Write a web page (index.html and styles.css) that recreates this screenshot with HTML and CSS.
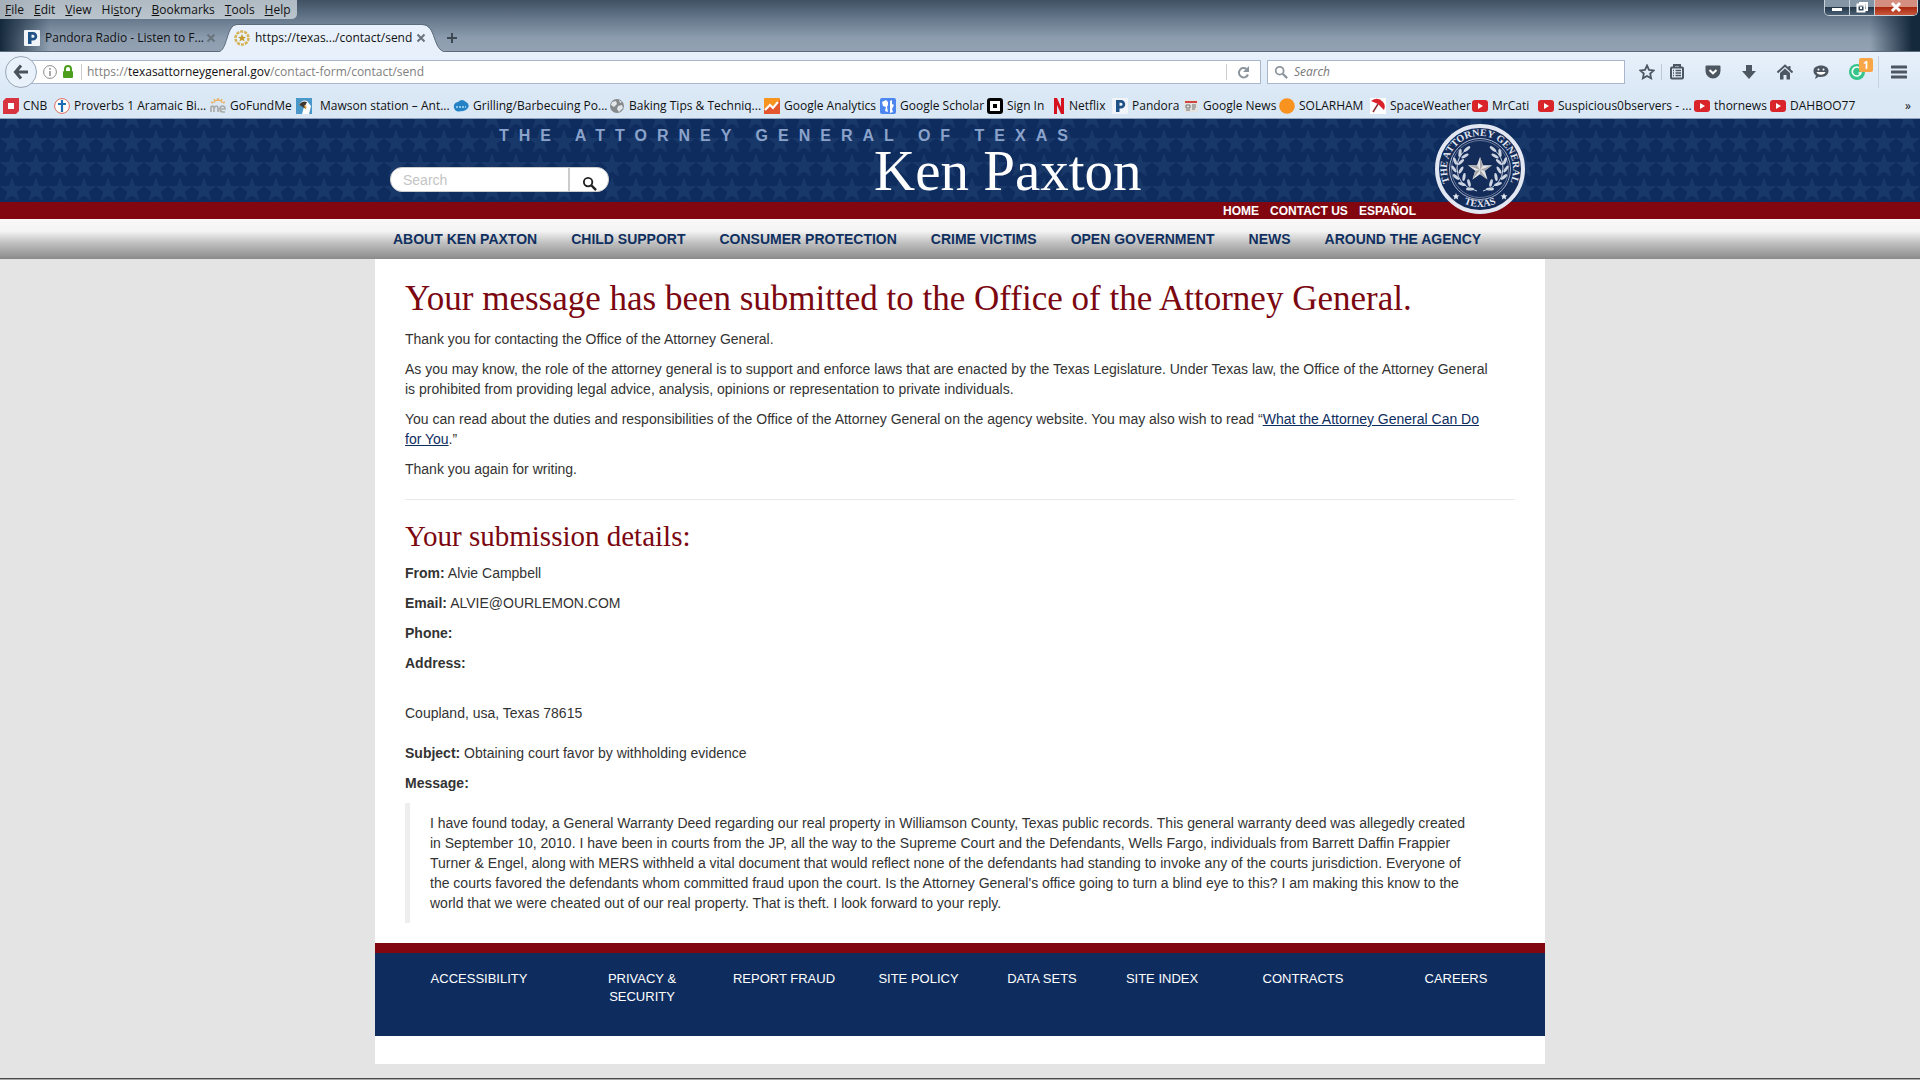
FILE: index.html
```html
<!DOCTYPE html>
<html lang="en">
<head>
<meta charset="utf-8">
<title>https://texas.../contact/send</title>
<link rel="stylesheet" href="styles.css">
</head>
<body>
<svg class="defs" aria-hidden="true">
  <symbol id="youtube" viewBox="0 0 16 16"><rect y="2" width="16" height="12" rx="3" fill="#d9252a"/><path d="M6 5v6l5-3z" fill="#fff"/></symbol>
  <symbol id="pandora" viewBox="0 0 16 16"><rect width="16" height="16" rx="1" fill="#f1f5f9"/><path d="M4 2h5a4 4 0 0 1 0 8.500H7.500V14H4z M7.500 4.800v3H9a1.500 1.500 0 0 0 0-3z" fill="#1f5286" fill-rule="evenodd"/></symbol>
  <symbol id="glass" viewBox="0 0 16 16"><circle cx="6.500" cy="6.500" r="4.500" fill="none" stroke="currentColor" stroke-width="2"/><path d="M10 10l5 5" stroke="currentColor" stroke-width="2.500"/></symbol>
  <symbol id="cross" viewBox="0 0 10 10"><path d="M1.500 1.500l7 7m0-7l-7 7" stroke="currentColor" stroke-width="2"/></symbol>
</svg>

<div class="browser">
  <div class="frame">
    <div class="title-row">
      <div class="menus">
        <button><u>F</u>ile</button><button><u>E</u>dit</button><button><u>V</u>iew</button><button>Hi<u>s</u>tory</button><button><u>B</u>ookmarks</button><button><u>T</u>ools</button><button><u>H</u>elp</button>
      </div>
      <div class="window-buttons">
        <button class="win" aria-label="Minimize"><svg width="24" height="16"><rect x="7" y="8" width="10" height="3" fill="#fff"/></svg></button>
        <button class="win" aria-label="Restore"><svg width="24" height="16" fill="none" stroke="#fff" stroke-width="2"><path d="M10 5V3h7v7h-2"/><rect x="7.500" y="4.500" width="7" height="7"/><path d="M10 8h2"/></svg></button>
        <button class="win win-close" aria-label="Close"><svg width="42" height="16"><path d="M17 3l8 8m0-8l-8 8" stroke="#fff" stroke-width="3"/></svg></button>
      </div>
    </div>
    <div class="tabs">
      <div class="tab">
        <svg width="16" height="16"><use href="#pandora"/></svg>
        <span class="tab-title">Pandora Radio - Listen to F...</span>
        <button class="tab-close" aria-label="Close tab"><svg width="10" height="10"><use href="#cross"/></svg></button>
      </div>
      <div class="tab tab-active">
        <svg class="tab-shape" width="228" height="28" viewBox="0 0 228 28"><path d="M0 28C10 27 8 1 19 1H204C219 1 214 27 228 28z" fill="#e8f1fb"/><path d="M0 28C10 27 8 .5 19 .5H204C219 .5 214 27 228 28" fill="none" stroke="#5c6b7a"/></svg>
        <svg width="16" height="16" viewBox="0 0 16 16"><circle cx="8" cy="8" r="6.500" fill="none" stroke="#d5b254" stroke-width="2.500" stroke-dasharray="3 1"/><path d="M8 4l1.200 2.700 2.800.2-2.200 1.800.8 2.800L8 10l-2.600 1.500.8-2.800L4 6.900l2.800-.2z" fill="#c59b2d"/></svg>
        <span class="tab-title">https://texas.../contact/send</span>
        <button class="tab-close" aria-label="Close tab"><svg width="10" height="10"><use href="#cross"/></svg></button>
      </div>
      <button class="new-tab" aria-label="New tab"><svg width="12" height="12"><path d="M6 1v10M1 6h10" stroke="#3d4853" stroke-width="2"/></svg></button>
    </div>
  </div>

  <div class="toolbar">
    <button class="back" aria-label="Back"><svg width="16" height="16" viewBox="0 0 16 16" fill="none" stroke="#4a525b" stroke-width="3"><path d="M8 1.500L2.500 8 8 14.500M3 8h12"/></svg></button>
    <div class="address-bar">
      <svg width="14" height="14" viewBox="0 0 14 14"><circle cx="7" cy="7" r="6.400" fill="none" stroke="#8c8c8c"/><path d="M7 6v5M7 3v1.800" stroke="#8c8c8c" stroke-width="1.500"/></svg>
      <svg width="12" height="14" viewBox="0 0 12 14"><path d="M3 7V4a3 3 0 0 1 6 0v3" fill="none" stroke="#4d9e1d" stroke-width="2"/><rect x="1" y="6" width="10" height="7" rx="1" fill="#4d9e1d"/></svg>
      <span class="url">https://<b>texasattorneygeneral.gov</b>/contact-form/contact/send</span>
      <button class="reload" aria-label="Reload"><svg width="13" height="13" viewBox="0 0 13 13"><path d="M11 8.500A4.700 4.700 0 1 1 9.500 3" fill="none" stroke="#8d959c" stroke-width="2"/><path d="M12 0v6H6z" fill="#8d959c"/></svg></button>
    </div>
    <label class="web-search"><svg width="14" height="14"><use href="#glass"/></svg><input type="search" placeholder="Search" aria-label="Search the web"></label>
    <div class="bookmark-tools">
      <button class="tool tool-star" aria-label="Bookmark this page"><svg width="16" height="16" viewBox="0 0 16 16"><path d="M8 1.500l2 4.300 4.700.6-3.500 3.200.9 4.700L8 12l-4.100 2.300.9-4.700L1.300 6.400 6 5.800z" fill="none" stroke="#4d5761" stroke-width="1.800"/></svg></button>
      <button class="tool" aria-label="Bookmarks list"><svg width="16" height="16" viewBox="0 0 16 16"><path d="M5 3V1h6v2" fill="none" stroke="#4d5761" stroke-width="2"/><rect x="2" y="3.500" width="12" height="11" rx="1" fill="none" stroke="#4d5761" stroke-width="2"/><path d="M4 6.500h1m1.500 0H12M4 9h1m1.500 0H12M4 11.500h1m1.500 0H12" stroke="#4d5761" stroke-width="1.500"/></svg></button>
    </div>
    <button class="tool" aria-label="Pocket"><svg width="16" height="16" viewBox="0 0 16 16"><path d="M1.500 1.500h13a1 1 0 0 1 1 1V7a7.500 7.500 0 0 1-15 0V2.500a1 1 0 0 1 1-1z" fill="#4d5761"/><path d="M4.500 6L8 9.300 11.500 6" fill="none" stroke="#fff" stroke-width="2"/></svg></button>
    <button class="tool" aria-label="Downloads"><svg width="16" height="16" viewBox="0 0 16 16"><path d="M5 1h6v6h4l-7 8-7-8h4z" fill="#4d5761"/></svg></button>
    <button class="tool" aria-label="Home"><svg width="16" height="16" viewBox="0 0 16 16"><path d="M.5 8.500L8 1.500l7.500 7M12.500 5V2" fill="none" stroke="#4d5761" stroke-width="2"/><path d="M3 9l5-4.500L13 9v6.500H9.500V11h-3v4.500H3z" fill="#4d5761"/></svg></button>
    <button class="tool" aria-label="Hello"><svg width="16" height="16" viewBox="0 0 16 16"><path d="M8 1.500c4.500 0 7.500 2.300 7.500 5.500S12.500 13 8 13c-1 0-1.500 0-2.300-.3L2 15l1-3.500C1.300 10.400.5 9 .5 7 .5 3.800 3.500 1.500 8 1.500z" fill="#4d5761"/><circle cx="5.500" cy="5.500" r="1" fill="#fff"/><circle cx="10.500" cy="5.500" r="1" fill="#fff"/><path d="M3.500 8h9c-1 3.500-8 3.500-9 0z" fill="#fff"/></svg></button>
    <button class="tool tool-badged" aria-label="Grammar check"><svg width="16" height="16" viewBox="0 0 16 16"><circle cx="8" cy="8" r="8" fill="#36c48a"/><path d="M11.500 5A4.500 4.500 0 1 0 12 9H9.500" fill="none" stroke="#fff" stroke-width="1.600"/></svg><span class="badge">1</span></button>
    <button class="tool tool-menu" aria-label="Open menu"><svg width="16" height="14"><path d="M1 2h14M1 7h14M1 12h14" stroke="#4d5761" stroke-width="3" stroke-linecap="round"/></svg></button>
  </div>

  <nav class="bookmarks" aria-label="Bookmarks">
    <a href="#"><svg width="16" height="16"><path d="M3 0h13v13l-3 3H0V3z" fill="#d8343f"/><rect x="5" y="5" width="6" height="6" fill="#fff"/></svg>CNB</a>
    <a href="#"><svg width="16" height="16"><circle cx="8" cy="8" r="7.400" fill="#fff" stroke="#dc6a5a"/><path d="M8 2v12M4 6h8" stroke="#1c6fb5" stroke-width="2.200"/></svg>Proverbs 1 Aramaic Bi...</a>
    <a href="#"><svg width="16" height="16" fill="none"><path d="M3 5L1 4m4-1L4 1m4 2V0m3 3l1-2m1 4l2-1M4 5a4 3 0 0 1 8 0" stroke="#e9b36a" stroke-width="1.500"/><path d="M1 14V9q3-2 3 1v4-4q3-4 4 0v4m2-3h5q0-3-2.500-3T10 11q0 3 3 3h2" stroke="#a9aaa6" stroke-width="1.700"/></svg>GoFundMe</a>
    <a href="#" class="spaced"><svg width="16" height="16"><rect width="16" height="16" fill="#4a98c9"/><path d="M3 7q3-6 8-4l4 5-2 8H6l2-7z" fill="#fff"/><path d="M3 7q3-5 8-3l-2 4 1 3-5-3z" fill="#3e3730"/><path d="M8 7l3 2-2 2z" fill="#e7a23b"/></svg>Mawson station – Ant...</a>
    <a href="#"><svg width="16" height="16"><path d="M1 10Q0 5 5 4q4-4 8 0 4 2 2 6-3 4-7 3-5 2-7-3z" fill="#2582c4"/><path d="M3 9h10" stroke="#8cc8ec" stroke-width="2" stroke-dasharray="2 1"/></svg>Grilling/Barbecuing Po...</a>
    <a href="#"><svg width="16" height="16"><circle cx="8" cy="8" r="7" fill="#85898c"/><path d="M3 4l4-1 1 3-3 3-3-2zM9 8l4-1 1 3-4 4-2-3zM10 2l3 2-2 1z" fill="#e3e6e8"/></svg>Baking Tips &amp; Techniq...</a>
    <a href="#"><svg width="16" height="16"><rect width="16" height="16" rx="1" fill="#f79420"/><path d="M0 12l5-5 4 3 7-8v14H0z" fill="#e4572e"/><path d="M1 12l5-5 3 3 5-6" fill="none" stroke="#fff" stroke-width="2"/></svg>Google Analytics</a>
    <a href="#"><svg width="16" height="16"><rect width="16" height="16" rx="2" fill="#4c86ee"/><path d="M2 4l4-2 2 2v3l-1 2 1 5-3-1 1-4-3-1zM10 3l2-1v4l2 1-2 4 1 3-3 1z" fill="#fff"/></svg>Google Scholar</a>
    <a href="#"><svg width="16" height="16"><rect x="1.500" y="1.500" width="13" height="13" rx="1.500" fill="#fff" stroke="#000" stroke-width="3"/><rect x="6" y="6" width="4" height="4"/></svg>Sign In</a>
    <a href="#"><svg width="12" height="16"><path d="M1 0h3l4 9V0h3v16H8L4 7v9H1z" fill="#d5121e"/></svg>Netflix</a>
    <a href="#"><svg width="16" height="16"><use href="#pandora"/></svg>Pandora</a>
    <a href="#"><svg width="16" height="16"><rect x="1" y="2" width="14" height="12" fill="#e3e3e1"/><path d="M2 4h12" stroke="#cf4740" stroke-width="2"/><path d="M3 7h4v3H3zM9 7h4M9 9h4M9 11h3M3 12h4" fill="none" stroke="#77736f"/></svg>Google News</a>
    <a href="#"><svg width="16" height="16"><circle cx="8" cy="8" r="7.800" fill="#f7931e"/></svg>SOLARHAM</a>
    <a href="#"><svg width="16" height="16"><rect width="16" height="16" fill="#fff"/><path d="M1 3q7-5 12 1 3 3 1 8L8 6z" fill="#d9222a"/><path d="M8 6l-5 8" stroke="#8d2a2a" stroke-width="1.500"/></svg>SpaceWeather</a>
    <a href="#"><svg width="16" height="16"><use href="#youtube"/></svg>MrCati</a>
    <a href="#"><svg width="16" height="16"><use href="#youtube"/></svg>Suspicious0bservers - ...</a>
    <a href="#"><svg width="16" height="16"><use href="#youtube"/></svg>thornews</a>
    <a href="#"><svg width="16" height="16"><use href="#youtube"/></svg>DAHBOO77</a>
    <button class="more" aria-label="More bookmarks">»</button>
  </nav>
</div>

<header class="site-header">
  <svg class="stars" aria-hidden="true">
    <defs><pattern id="star-tile" y="10" width="24" height="24" patternUnits="userSpaceOnUse"><path d="M12 0l3 9h9l-7.200 5.600L19.600 24 12 18.500 4.400 24l2.800-9.400L0 9h9z" fill="#18386a"/></pattern></defs>
    <rect width="100%" height="100%" fill="url(#star-tile)"/>
  </svg>
  <div class="container masthead">
    <p class="tagline">THE ATTORNEY GENERAL OF TEXAS</p>
    <div class="masthead-row">
      <form class="site-search">
        <input type="text" placeholder="Search" aria-label="Search this site">
        <button type="button" aria-label="Search"><svg width="15" height="15"><use href="#glass"/></svg></button>
      </form>
      <p class="name">Ken Paxton</p>
    </div>
    <svg class="seal" width="90" height="90" viewBox="0 0 90 90" role="img" aria-label="Seal of the Attorney General of Texas">
      <defs>
        <path id="arc-top" d="M21.700 68.300A33 33 0 1 1 68.300 68.300"/>
        <path id="arc-bottom" d="M11 63A39 39 0 0 0 79 63"/>
        <g id="branch" fill="#cdd4e2"><path d="M42 67Q22 62 22 44 22 32 32 25" fill="none" stroke="#cdd4e2"/><ellipse cx="32" cy="25" rx="4" ry="1.500" transform="rotate(-40 32 25)"/><ellipse cx="25" cy="29" rx="4" ry="1.500" transform="rotate(-80 25 29)"/><ellipse cx="30" cy="32" rx="4" ry="1.500" transform="rotate(-30 30 32)"/><ellipse cx="20" cy="37" rx="4" ry="1.500" transform="rotate(70 20 37)"/><ellipse cx="26" cy="38" rx="4" ry="1.500" transform="rotate(-45 26 38)"/><ellipse cx="19" cy="45" rx="4" ry="1.500" transform="rotate(55 19 45)"/><ellipse cx="26" cy="46" rx="4" ry="1.500" transform="rotate(-60 26 46)"/><ellipse cx="21" cy="53" rx="4" ry="1.500" transform="rotate(40 21 53)"/><ellipse cx="29" cy="53" rx="4" ry="1.500" transform="rotate(-80 29 53)"/><ellipse cx="27" cy="60" rx="4" ry="1.500" transform="rotate(20 27 60)"/><ellipse cx="34" cy="59" rx="4" ry="1.500" transform="rotate(75 34 59)"/><ellipse cx="35" cy="65" rx="4" ry="1.500"/></g>
      </defs>
      <circle cx="45" cy="45" r="43" fill="#132c5a" stroke="#e3e7f2" stroke-width="4"/>
      <circle cx="45" cy="45" r="30.500" fill="none" stroke="#aab5cc"/>
      <circle cx="45" cy="45" r="28.500" fill="none" stroke="#8794b3" stroke-width=".7"/>
      <use href="#branch"/><use href="#branch" transform="matrix(-1 0 0 1 90 0)"/>
      <path d="M45 33l3 8.300h9l-7.200 5.400 2.700 8.800-7.500-5.200-7.500 5.200 2.700-8.800L33 41.300h9z" fill="#e4e4e6"/>
      <path d="M45 33v13l3-4.700zM57 41.300L45 46l4.800.7zM52.500 55.500L45 46v4.300zM37.500 55.500L45 46l-4.800.7zM33 41.300L45 46l-3-4.700z" fill="#a6a6aa"/>
      <path d="M21 69l1 2.200 2.400.2-1.800 1.600.5 2.400-2.100-1.200-2.100 1.200.5-2.400-1.800-1.600 2.400-.2zM69 69l1 2.200 2.400.2-1.800 1.600.5 2.400-2.100-1.200-2.100 1.200.5-2.400-1.800-1.600 2.400-.2z" fill="#e3e7f2"/>
      <text class="seal-text"><textPath href="#arc-top" startOffset="50%" text-anchor="middle">THE ATTORNEY GENERAL</textPath></text>
      <text class="seal-text"><textPath href="#arc-bottom" startOffset="50%" text-anchor="middle">TEXAS</textPath></text>
    </svg>
  </div>
  <div class="utility">
    <nav class="container utility-links" aria-label="Utility">
      <a href="#">HOME</a><a href="#">CONTACT US</a><a href="#">ESPAÑOL</a>
    </nav>
  </div>
</header>
<div class="main-nav">
  <nav class="container main-links" aria-label="Main">
    <a href="#">ABOUT KEN PAXTON</a><a href="#">CHILD SUPPORT</a><a href="#">CONSUMER PROTECTION</a><a href="#">CRIME VICTIMS</a><a href="#">OPEN GOVERNMENT</a><a href="#">NEWS</a><a href="#">AROUND THE AGENCY</a>
  </nav>
</div>

<div class="container page">
  <main class="content">
    <h1>Your message has been submitted to the Office of the Attorney General.</h1>
    <p>Thank you for contacting the Office of the Attorney General.</p>
    <p>As you may know, the role of the attorney general is to support and enforce laws that are enacted by the Texas Legislature. Under Texas law, the Office of the Attorney General<br> is prohibited from providing legal advice, analysis, opinions or representation to private individuals.</p>
    <p>You can read about the duties and responsibilities of the Office of the Attorney General on the agency website. You may also wish to read “<a href="#">What the Attorney General Can Do<br> for You</a>.”</p>
    <p>Thank you again for writing.</p>
    <hr>
    <h2>Your submission details:</h2>
    <p><strong>From:</strong> Alvie Campbell</p>
    <p><strong>Email:</strong> ALVIE@OURLEMON.COM</p>
    <p><strong>Phone:</strong></p>
    <p><strong>Address:</strong></p>
    <address>Coupland, usa, Texas 78615</address>
    <p><strong>Subject:</strong> Obtaining court favor by withholding evidence</p>
    <p><strong>Message:</strong></p>
    <blockquote>I have found today, a General Warranty Deed regarding our real property in Williamson County, Texas public records. This general warranty deed was allegedly created<br> in September 10, 2010. I have been in courts from the JP, all the way to the Supreme Court and the Defendants, Wells Fargo, individuals from Barrett Daffin Frappier<br> Turner &amp; Engel, along with MERS withheld a vital document that would reflect none of the defendants had standing to invoke any of the courts jurisdiction. Everyone of<br> the courts favored the defendants whom committed fraud upon the court. Is the Attorney General's office going to turn a blind eye to this? I am making this know to the<br> world that we were cheated out of our real property. That is theft. I look forward to your reply.</blockquote>
  </main>
  <footer class="site-footer">
    <a href="#">ACCESSIBILITY</a><a href="#">PRIVACY &amp;<br> SECURITY</a><a href="#">REPORT FRAUD</a><a href="#">SITE POLICY</a><a href="#">DATA SETS</a><a href="#">SITE INDEX</a><a href="#">CONTRACTS</a><a href="#">CAREERS</a>
  </footer>
</div>
<div class="taskbar-edge"></div>
</body>
</html>
```
FILE: styles.css
```css
* { box-sizing: border-box; }

body {
  margin: 0;
  min-height: 100vh;
  display: flex;
  flex-direction: column;
  background: #e4e4e4;
  color: #333;
  font: 14px/20px "Liberation Sans", Arial, sans-serif;
}

button {
  border: 0;
  padding: 0;
  background: none;
  color: inherit;
  font: inherit;
}

input { font: inherit; min-width: 0; border: 0; outline: 0; background: none; }
svg { display: block; flex: none; }
.defs { position: absolute; width: 0; height: 0; }

/* Browser window */
.browser {
  color: #111;
  font: 12px/16px "Open Sans", "Noto Sans", sans-serif;
}

.frame {
  height: 52px;
  border-bottom: 1px solid #5c6b7a;
  background:
    linear-gradient(90deg, #15293c 0, rgba(21, 41, 60, 0) 50px, rgba(21, 41, 60, 0) calc(100% - 50px), #15293c calc(100% - 8px)),
    linear-gradient(#3f5162, #64768a 35%, #8d9daf 75%, #92a2b3);
}

.title-row { display: flex; justify-content: space-between; height: 24px; }

.menus {
  display: flex;
  gap: 10px;
  height: 19px;
  padding: 0 6px 0 5px;
  border-radius: 0 0 5px 0;
  background: rgba(213, 221, 227, .75);
}

.window-buttons {
  display: flex;
  height: 16px;
  margin-right: 2px;
  border: 1px solid #c6ced6;
  border-top: 0;
  border-radius: 0 0 5px 5px;
  overflow: hidden;
}

.win { border-right: 1px solid #c6ced6; background: linear-gradient(#8495a5 45%, #24384b 50%, #4b6074); }
.win-close { border-right: 0; background: linear-gradient(#d58f80 45%, #a9280e 50%, #c9583d); }

.tabs { display: flex; height: 28px; }
.tab { position: relative; display: flex; align-items: center; width: 218px; padding: 0 2px 0 24px; height: 28px; }
.tab-active { width: 228px; padding: 0 20px 0 16px; }
.tab > svg { position: relative; }
.tab > .tab-shape { position: absolute; left: 0; top: 0; }
.tab-title { position: relative; flex: 1; margin-left: 5px; white-space: nowrap; }
.tab-close { position: relative; color: #69737d; }
.new-tab { width: 14px; }

.toolbar {
  display: flex;
  align-items: center;
  gap: 6px;
  height: 40px;
  padding: 0 6px 0 5px;
  background: linear-gradient(#e8f1fb, #dbe8f6);
}

.back {
  position: relative;
  display: grid;
  place-items: center;
  width: 32px;
  height: 32px;
  margin-right: -12px;
  border: 1px solid #98a6b5;
  border-radius: 50%;
  background: #e9f1fa;
}

.address-bar, .web-search {
  display: flex;
  align-items: center;
  height: 24px;
  border: 1px solid #a9b6cb;
  background: #fff;
}

.address-bar { flex: 1; gap: 5px; padding-left: 11px; }
.url { flex: 1; margin-left: 2px; padding-left: 5px; border-left: 1px solid #ccc; color: #808080; }
.url b { color: #111; font-weight: 400; }
.reload { width: 34px; height: 16px; padding-left: 10px; border-left: 1px solid #ccc; }
.web-search { width: 358px; gap: 4px; padding-left: 6px; color: #8d959c; }
.web-search input { flex: 1; font-style: italic; }
.web-search input::placeholder { color: #777; }

.bookmark-tools { display: flex; }
.tool { position: relative; display: grid; place-items: center; width: 30px; height: 24px; }
.tool-star { width: 31px; }
.tool-star::after { content: ""; position: absolute; right: 0; top: 4px; height: 16px; border-right: 1px solid #bcc8d5; }
.tool-menu { margin-left: 6px; }
.tool-menu::before { content: ""; position: absolute; left: -6px; top: -4px; height: 32px; border-left: 1px solid #c6d2df; }
.badge {
  position: absolute;
  right: -1px;
  top: -2px;
  width: 14px;
  height: 14px;
  border-radius: 2px;
  background: #f9a646;
  color: #fff;
  font-size: 10px;
  font-weight: 700;
  line-height: 14px;
}

.bookmarks {
  display: grid;
  grid-template-columns: 51px 156px 86px 157px 156px 155px 116px 107px 66px 59px 71px 96px 91px 102px 66px 156px 76px auto 12px;
  align-items: center;
  height: 27px;
  padding: 1px 3px 0;
  border-bottom: 1px solid #8fa3bd;
  background: #dae8f6;
  overflow: hidden;
}

.bookmarks a { display: flex; align-items: center; gap: 4px; color: inherit; text-decoration: none; white-space: nowrap; }
.bookmarks .spaced { gap: 8px; }
.more { text-align: left; }

/* Site header */
.container { position: relative; width: 100%; max-width: 1170px; margin: 0 auto; }
.site-header { position: relative; background: #0e2d5e; }
.stars { position: absolute; width: 100%; height: 83px; }
.masthead { height: 83px; padding: 8px 15px 0; }

.tagline {
  margin: 0 0 0 109px;
  color: #8ba3cb;
  font-size: 16px;
  font-weight: 700;
  line-height: 18px;
  letter-spacing: 10px;
  white-space: nowrap;
}

.masthead-row { display: flex; gap: 265px; }

.site-search {
  display: flex;
  width: 219px;
  height: 25px;
  margin-top: 22px;
  border: 1px solid #ccc;
  border-radius: 12px;
  background: #fff;
  overflow: hidden;
}

.site-search input { flex: 1; padding: 0 12px; border-right: 2px solid #ccc; }
.site-search input::placeholder { color: #c4c4c4; }
.site-search button { width: 38px; padding: 8px 0 0 12px; color: #222; }

.name {
  margin: 2px 0 0;
  color: #fff;
  font: 57px/48px "Liberation Serif", "Times New Roman", serif;
  white-space: nowrap;
}

.seal { position: absolute; right: 20px; top: 5px; z-index: 1; }
.seal-text { fill: #e3e7f2; font: 700 10px "Liberation Serif", "Times New Roman", serif; }

.utility { background: #82060f; }
.utility-links { display: flex; justify-content: flex-end; gap: 11px; padding: 2px 129px 0 0; }
.utility-links a { color: #fff; font-size: 12px; font-weight: 700; line-height: 15px; text-decoration: none; }

.main-nav { background: linear-gradient(#f8f8f8, #f4f4f4 30%, #c0c0c0 60%, #8a8a8a); }
.main-links { display: flex; gap: 34px; padding-left: 18px; }
.main-links a { color: #10305f; font-weight: 700; line-height: 40px; text-decoration: none; white-space: nowrap; }

/* Page body */
.page { padding-bottom: 28px; background: #fff; }
.content { display: flow-root; padding: 0 30px; }

h1, h2 {
  margin: 20px 0 10px;
  color: #7b0710;
  font-family: "Liberation Serif", "Times New Roman", serif;
  font-weight: 400;
}

h1 { font-size: 35px; line-height: 40px; }
h2 { font-size: 29px; line-height: 33px; }
.content p { margin: 0 0 10px; }
.content a { color: #0e2d5e; text-decoration: underline; }
hr { width: 100%; margin: 20px 0; border: 0; border-top: 1px solid #e8e8e8; }
address { padding: 20px 0; font-style: normal; }
blockquote { margin: 0 0 20px; padding: 10px 20px; border-left: 5px solid #eee; }

.site-footer {
  display: grid;
  grid-template-columns: 208fr 118fr 166fr 103fr 144fr 96fr 186fr 120fr;
  height: 93px;
  padding: 17px 29px 0 0;
  border-top: 10px solid #82060f;
  background: #0e2d5e;
}

.site-footer a { color: #fff; font-size: 13px; line-height: 18px; text-align: center; text-decoration: none; }
.taskbar-edge { height: 2px; margin-top: auto; border-top: 1px solid #4a4a4a; background: #aaa; }
```
